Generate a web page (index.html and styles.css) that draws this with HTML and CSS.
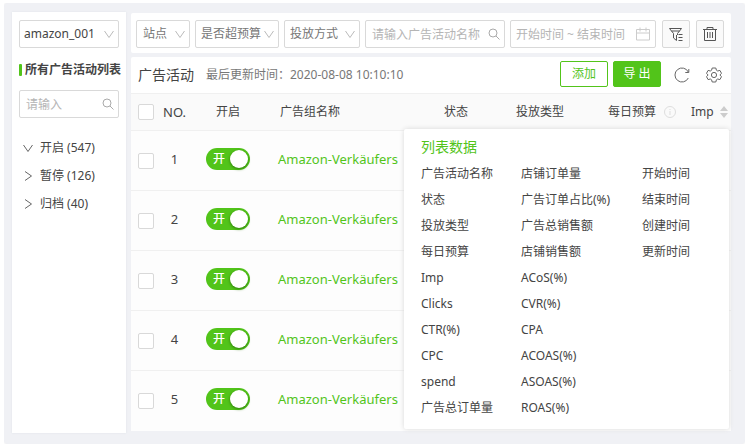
FILE: index.html
```html
<!DOCTYPE html>
<html lang="zh-CN">
<head>
    <meta charset="utf-8">
    <title>广告活动</title>
    <link rel="stylesheet" href="styles.css">
</head>
<body>
    <svg class="sprite" aria-hidden="true">
        <symbol id="down" viewBox="0 0 12 12"><path d="M1.5 3L6 9.5L10.5 3"/></symbol>
        <symbol id="right" viewBox="0 0 12 12"><path d="M3 1.5L9.5 6L3 10.5"/></symbol>
        <symbol id="search" viewBox="0 0 12 12"><circle cx="5" cy="5" r="4"/><path d="M8 8L11.5 11.5"/></symbol>
    </svg>

    <div class="page">
        <aside class="sidebar">
            <label class="field">
                <select class="account" aria-label="账号"><option>amazon_001</option></select>
                <svg class="icon"><use href="#down"/></svg>
            </label>
            <h2>所有广告活动列表</h2>
            <label class="field">
                <input type="text" placeholder="请输入" aria-label="搜索活动">
                <svg class="icon search"><use href="#search"/></svg>
            </label>
            <ul class="tree">
                <li><button><svg class="icon"><use href="#down"/></svg>开启 (547)</button></li>
                <li><button><svg class="icon"><use href="#right"/></svg>暂停 (126)</button></li>
                <li><button><svg class="icon"><use href="#right"/></svg>归档 (40)</button></li>
            </ul>
        </aside>

        <main class="main">
            <div class="filters">
                <label class="field site">
                    <select aria-label="站点"><option>站点</option></select>
                    <svg class="icon"><use href="#down"/></svg>
                </label>
                <label class="field budget">
                    <select aria-label="是否超预算"><option>是否超预算</option></select>
                    <svg class="icon"><use href="#down"/></svg>
                </label>
                <label class="field mode">
                    <select aria-label="投放方式"><option>投放方式</option></select>
                    <svg class="icon"><use href="#down"/></svg>
                </label>
                <label class="field keyword">
                    <input type="text" placeholder="请输入广告活动名称" aria-label="广告活动名称">
                    <svg class="icon search"><use href="#search"/></svg>
                </label>
                <label class="field dates">
                    <input type="text" placeholder="开始时间 ~ 结束时间" aria-label="时间范围">
                    <svg class="icon calendar" viewBox="0 0 14 14"><path d="M.5 2.5h13v10.5H.5zM.5 6h13M4 .5v4M10 .5v4"/></svg>
                </label>
                <div class="tools">
                    <button class="tool" aria-label="筛选">
                        <svg viewBox="0 0 16 16"><path d="M1.500 2.500h12L9.500 7.500v1.500M1.500 2.500l4 5V12L8.500 14.500V9M3.500 5h8M10.500 8.500h4M10.500 11.500h4M10.500 14.500h4"/></svg>
                    </button>
                    <button class="tool" aria-label="删除">
                        <svg viewBox="0 0 16 16"><path d="M1 3.500h14M5 3V1.500h6V3M2.500 4v10.500h11V4M5.500 6v6M8 6v6M10.500 6v6"/></svg>
                    </button>
                </div>
            </div>

            <section class="list">
                <div class="toolbar">
                    <h1>广告活动</h1>
                    <span class="updated">最后更新时间：2020-08-08 10:10:10</span>
                    <div class="actions">
                        <button class="btn">添加</button>
                        <button class="btn primary">导 出</button>
                    </div>
                    <button class="plain" aria-label="刷新">
                        <svg viewBox="0 0 16 16"><path d="M14.300 11A7 7 0 1 1 14.300 5M14.800 2v3.500h-3.500"/></svg>
                    </button>
                    <button class="plain" aria-label="设置">
                        <svg viewBox="0 0 16 16"><path d="M6.200 1h3.600l.6 2.200 1.300.8 2.200-.6 1.600 2.900L13.900 8l1.600 1.700-1.600 2.900-2.200-.6-1.300.8-.6 2.200H6.200l-.6-2.200-1.300-.8-2.200.6L.5 9.700 2.100 8 .5 6.300l1.600-2.900 2.200.6 1.300-.8z"/><circle cx="8" cy="8" r="2.600"/></svg>
                    </button>
                </div>

                <table>
                    <colgroup>
                        <col class="c-check"><col class="c-no"><col class="c-on"><col class="c-name">
                        <col class="c-state"><col class="c-type"><col class="c-budget"><col class="c-imp">
                    </colgroup>
                    <thead>
                        <tr>
                            <th><input type="checkbox" class="check" aria-label="全选"></th>
                            <th class="center no">NO.</th>
                            <th class="center">开启</th>
                            <th class="name">广告组名称</th>
                            <th class="center">状态</th>
                            <th class="center">投放类型</th>
                            <th class="daily"><span class="head">每日预算
                                <svg class="info" viewBox="0 0 12 12"><circle cx="6" cy="6" r="5.500"/><path d="M6 5v4M6 3v1"/></svg></span></th>
                            <th><span class="head imp">Imp
                                <svg class="sort" viewBox="0 0 8 12"><path d="M0 5l4-5 4 5zM0 7l4 5 4-5z"/></svg></span></th>
                        </tr>
                    </thead>
                    <tbody>
                        <tr>
                            <td><input type="checkbox" class="check" aria-label="选择 1"></td>
                            <td class="center num">1</td>
                            <td class="center"><label class="switch"><input type="checkbox" checked><span>开</span></label></td>
                            <td class="name"><a href="#">Amazon-Verkäufers</a></td>
                            <td></td><td></td><td></td><td></td>
                        </tr>
                        <tr>
                            <td><input type="checkbox" class="check" aria-label="选择 2"></td>
                            <td class="center num">2</td>
                            <td class="center"><label class="switch"><input type="checkbox" checked><span>开</span></label></td>
                            <td class="name"><a href="#">Amazon-Verkäufers</a></td>
                            <td></td><td></td><td></td><td></td>
                        </tr>
                        <tr>
                            <td><input type="checkbox" class="check" aria-label="选择 3"></td>
                            <td class="center num">3</td>
                            <td class="center"><label class="switch"><input type="checkbox" checked><span>开</span></label></td>
                            <td class="name"><a href="#">Amazon-Verkäufers</a></td>
                            <td></td><td></td><td></td><td></td>
                        </tr>
                        <tr>
                            <td><input type="checkbox" class="check" aria-label="选择 4"></td>
                            <td class="center num">4</td>
                            <td class="center"><label class="switch"><input type="checkbox" checked><span>开</span></label></td>
                            <td class="name"><a href="#">Amazon-Verkäufers</a></td>
                            <td></td><td></td><td></td><td></td>
                        </tr>
                        <tr>
                            <td><input type="checkbox" class="check" aria-label="选择 5"></td>
                            <td class="center num">5</td>
                            <td class="center"><label class="switch"><input type="checkbox" checked><span>开</span></label></td>
                            <td class="name"><a href="#">Amazon-Verkäufers</a></td>
                            <td></td><td></td><td></td><td></td>
                        </tr>
                    </tbody>
                </table>

                <div class="popover">
                    <h3>列表数据</h3>
                    <div class="columns">
                        <ul>
                            <li>广告活动名称</li>
                            <li>状态</li>
                            <li>投放类型</li>
                            <li>每日预算</li>
                            <li>Imp</li>
                            <li>Clicks</li>
                            <li>CTR(%)</li>
                            <li>CPC</li>
                            <li>spend</li>
                            <li>广告总订单量</li>
                        </ul>
                        <ul>
                            <li>店铺订单量</li>
                            <li>广告订单占比(%)</li>
                            <li>广告总销售额</li>
                            <li>店铺销售额</li>
                            <li>ACoS(%)</li>
                            <li>CVR(%)</li>
                            <li>CPA</li>
                            <li>ACOAS(%)</li>
                            <li>ASOAS(%)</li>
                            <li>ROAS(%)</li>
                        </ul>
                        <ul>
                            <li>开始时间</li>
                            <li>结束时间</li>
                            <li>创建时间</li>
                            <li>更新时间</li>
                        </ul>
                    </div>
                </div>
            </section>
        </main>
    </div>
</body>
</html>
```
FILE: styles.css
```css
* {
    box-sizing: border-box;
}
body {
    margin: 3px 2px 3px 4px;
    background: #fff;
    color: #444;
    font: 12px/18px "Noto Sans", "Noto Sans CJK SC", sans-serif;
}
h1, h2, h3, ul {
    margin: 0;
    padding: 0;
    list-style: none;
}
button, input, select {
    font: inherit;
    color: inherit;
    margin: 0;
}
button {
    padding: 0;
    border: 0;
    background: none;
    cursor: pointer;
}
svg {
    fill: none;
    stroke: currentColor;
}
.sprite {
    display: none;
}
.page {
    display: flex;
    gap: 5px;
    padding: 9px 14px 11px 8px;
    background: #f0f1f5;
    border-radius: 4px;
    box-shadow: 0 0 3px #e4e5e8;
}

/* 侧边栏 */
.sidebar {
    flex: 0 0 114px;
    min-width: 0;
    padding: 8px 7px;
    background: #fff;
    box-shadow: 0 0 2px #dfe3e8;
}
.sidebar h2 {
    display: flex;
    align-items: center;
    gap: 3px;
    height: 42px;
    padding-top: 2px;
    font-size: 12px;
    white-space: nowrap;
}
.sidebar h2::before {
    content: "";
    flex: none;
    width: 3px;
    height: 12px;
    border-radius: 1px;
    background: #52c41a;
}
.tree {
    margin-top: 16px;
}
.tree button {
    display: flex;
    align-items: center;
    gap: 6px;
    height: 28px;
    padding-left: 3px;
}
.tree .icon {
    color: #666;
}

/* 输入框、下拉框：图标与控件叠在同一格 */
.field {
    display: grid;
    align-items: center;
}
.field > * {
    grid-area: 1 / 1;
}
.field select, .field input {
    width: 100%;
    min-width: 0;
    height: 28px;
    padding: 0 6px;
    border: 1px solid #d9d9d9;
    border-radius: 2px;
    background: #fff;
    appearance: none;
    outline: none;
}
.field select {
    color: #777;
}
.field .account {
    padding: 0 4px;
    color: #444;
}
.field input::placeholder {
    color: #b5b5b5;
    opacity: 1;
}
.field .icon {
    justify-self: end;
    margin-right: 4px;
    color: #bbb;
    pointer-events: none;
}
.icon {
    width: 12px;
    height: 12px;
}
.field .search {
    margin-right: 5px;
    color: #aaa;
}

/* 筛选栏 */
.main {
    flex: 1;
    min-width: 0;
    margin: 1px 0 2px;
}
.filters {
    display: flex;
    gap: 5px;
    padding: 7px 7px 5px 5px;
    background: #fff;
    border-radius: 2px;
}
.site {
    width: 54px;
}
.budget {
    width: 84px;
}
.budget select {
    padding: 0 5px;
}
.mode {
    width: 76px;
}
.mode select {
    padding: 0 5px;
}
.keyword {
    flex: 1;
}
.dates {
    width: 146px;
}
.dates input {
    padding: 0 5px;
}
.field .calendar {
    width: 14px;
    height: 14px;
    margin-right: 6px;
    color: #ccc;
}
.tools {
    display: flex;
    gap: 6px;
    margin-left: 1px;
}
.tool {
    display: grid;
    place-items: center;
    width: 28px;
    height: 28px;
    border: 1px solid #d9d9d9;
    border-radius: 2px;
    background: #fafafa;
    color: #555;
}
.tool svg {
    width: 16px;
    height: 16px;
}

/* 列表 */
.list {
    position: relative;
    margin-top: 4px;
    background: #fff;
    border-radius: 2px;
}
.toolbar {
    display: flex;
    align-items: center;
    height: 36px;
    padding: 0 9px 0 7px;
}
.toolbar h1 {
    font-size: 14px;
    font-weight: 400;
}
.updated {
    margin-left: 12px;
    color: #777;
}
.actions {
    display: flex;
    gap: 5px;
    margin: 0 13px 2px auto;
}
.btn {
    width: 48px;
    height: 26px;
    border: 1px solid #52c41a;
    border-radius: 2px;
    color: #52c41a;
}
.primary {
    background: #52c41a;
    color: #fff;
}
.plain {
    display: flex;
    color: #666;
}
.plain + .plain {
    margin-left: 16px;
}
.plain svg {
    width: 16px;
    height: 16px;
}
table {
    width: 100%;
    table-layout: fixed;
    border-collapse: collapse;
}
.c-check { width: 27px; }
.c-no { width: 33px; }
.c-on { width: 74px; }
.c-state { width: 88px; }
.c-type { width: 80px; }
.c-budget { width: 100px; }
.c-imp { width: 51px; }
th, td {
    padding: 0;
    border-top: 1px solid #f0f0f0;
    text-align: left;
    font-weight: 400;
    white-space: nowrap;
}
th {
    height: 37px;
    background: #fafafa;
}
td {
    height: 60px;
    background: #fdfdfd;
}
.center {
    text-align: center;
}
td.center, td.name {
    padding-bottom: 3px;
}
.no, .num {
    font-size: 13px;
}
td.name {
    padding-left: 13px;
    font-size: 13px;
}
th.name {
    padding-left: 15px;
}
.name a {
    color: #52c41a;
    text-decoration: none;
}
.daily {
    padding-left: 28px;
}
.head {
    display: flex;
    align-items: center;
    gap: 8px;
}
.imp {
    padding-left: 11px;
    gap: 6px;
}
.info {
    width: 12px;
    height: 12px;
    color: #ddd;
}
.sort {
    width: 8px;
    height: 12px;
    fill: #ccc;
    stroke: none;
}
.check {
    display: block;
    width: 16px;
    height: 16px;
    margin-left: 7px;
    border: 1px solid #d9d9d9;
    border-radius: 2px;
    background: #fff;
    appearance: none;
}
.check:checked {
    background: #52c41a;
}
.switch {
    display: inline-grid;
    align-items: center;
    vertical-align: middle;
    width: 44px;
    height: 22px;
    color: #fff;
    cursor: pointer;
}
.switch > * {
    grid-area: 1 / 1;
}
.switch input {
    display: flex;
    align-items: center;
    justify-content: flex-start;
    width: 44px;
    height: 22px;
    padding: 2px;
    border-radius: 11px;
    background: #bbb;
    appearance: none;
}
.switch input:checked {
    justify-content: flex-end;
    background: #52c41a;
}
.switch input::before {
    content: "";
    width: 18px;
    height: 18px;
    border-radius: 50%;
    background: #fff;
    box-shadow: 0 1px 3px #2b7a08;
}
.switch span {
    z-index: 1;
    justify-self: start;
    padding-left: 7px;
    font-weight: 500;
}

/* 列表数据浮层 */
.popover {
    position: absolute;
    top: 72px;
    right: 2px;
    width: 325px;
    padding: 4px 17px 8px;
    background: #fff;
    border-radius: 2px;
    box-shadow: 0 0 5px #d8d8d8;
}
.popover h3 {
    font-size: 14px;
    font-weight: 400;
    line-height: 28px;
    color: #52c41a;
}
.columns {
    display: grid;
    grid-template-columns: 100px 121px 1fr;
}
.columns li {
    line-height: 26px;
}
```
